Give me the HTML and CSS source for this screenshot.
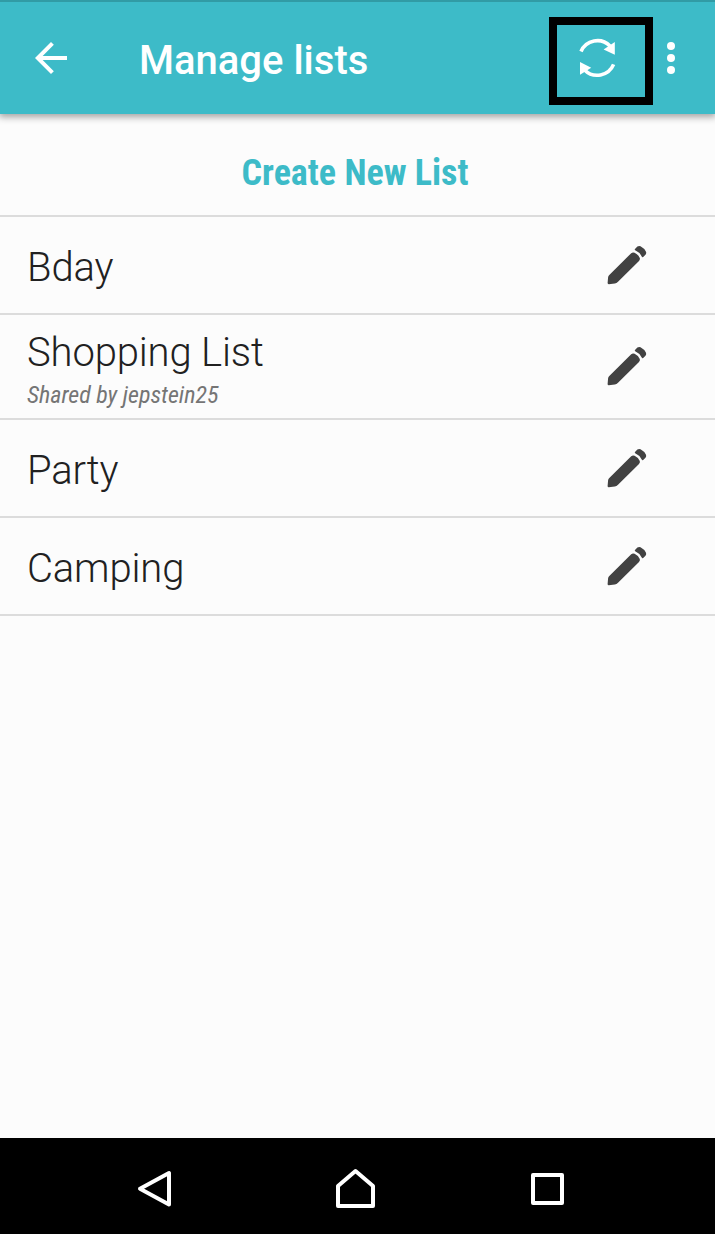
FILE: index.html
```
<!DOCTYPE html>
<html lang="en">
  <head>
    <meta charset="UTF-8" />
    <meta name="viewport" content="width=device-width, initial-scale=1.0" />
    <title>Manage lists</title>
    <link rel="stylesheet" href="styles.css">
  </head>
  <body>
    <header class="toolbar">
      <svg class="icon back" viewBox="0 0 24 24">
        <path d="M20 11H7.83l5.59-5.59L12 4l-8 8 8 8 1.41-1.41L7.83 13H20v-2z" />
      </svg>
      <h1>Manage lists</h1>
      <div class="sync">
        <svg class="icon" viewBox="0 0 48 48">
          <path class="arc" d="M8 17.5A17.7 17.7 0 0 1 37 12" />
          <path d="M41.8 8V20.8L30.6 15.4z" />
          <path class="arc" d="M40.6 30.4A17.7 17.7 0 0 1 11.6 35.9" />
          <path d="M7 28V40.8L18.2 33.8z" />
        </svg>
      </div>
      <svg class="icon more" viewBox="0 0 24 24">
        <circle cx="12" cy="6" r="2" />
        <circle cx="12" cy="12" r="2" />
        <circle cx="12" cy="18" r="2" />
      </svg>
    </header>

    <main>
      <div class="create">Create New List</div>
      <ul class="lists">
        <li>
          <div class="name">Bday</div>
          <svg class="pencil" viewBox="0 0 40 40">
            <path d="M24.2 8.2Q25.8 6.9 27.6 7.8Q31.4 9.6 32.8 13Q33.3 14.6 32 15.9L11 36.8Q9.6 38.2 7.8 38.5L1.8 39.2Q.5 39.2.6 37.9L1.1 32.2Q1.3 31 2.3 30zM28.2 3.8L30.4 1.6Q31.8.4 33.5 1.2Q37.4 3.2 39 6.7Q39.6 8.4 38.5 9.7L36.2 12Q35.3 12.7 34.7 11.5Q32.6 7.2 28.2 5.3Q27.2 4.8 28.2 3.8z" />
          </svg>
        </li>
        <li class="shared">
          <div>
            <div class="name">Shopping List</div>
            <div class="owner">Shared by jepstein25</div>
          </div>
          <svg class="pencil" viewBox="0 0 40 40">
            <path d="M24.2 8.2Q25.8 6.9 27.6 7.8Q31.4 9.6 32.8 13Q33.3 14.6 32 15.9L11 36.8Q9.6 38.2 7.8 38.5L1.8 39.2Q.5 39.2.6 37.9L1.1 32.2Q1.3 31 2.3 30zM28.2 3.8L30.4 1.6Q31.8.4 33.5 1.2Q37.4 3.2 39 6.7Q39.6 8.4 38.5 9.7L36.2 12Q35.3 12.7 34.7 11.5Q32.6 7.2 28.2 5.3Q27.2 4.8 28.2 3.8z" />
          </svg>
        </li>
        <li>
          <div class="name">Party</div>
          <svg class="pencil" viewBox="0 0 40 40">
            <path d="M24.2 8.2Q25.8 6.9 27.6 7.8Q31.4 9.6 32.8 13Q33.3 14.6 32 15.9L11 36.8Q9.6 38.2 7.8 38.5L1.8 39.2Q.5 39.2.6 37.9L1.1 32.2Q1.3 31 2.3 30zM28.2 3.8L30.4 1.6Q31.8.4 33.5 1.2Q37.4 3.2 39 6.7Q39.6 8.4 38.5 9.7L36.2 12Q35.3 12.7 34.7 11.5Q32.6 7.2 28.2 5.3Q27.2 4.8 28.2 3.8z" />
          </svg>
        </li>
        <li>
          <div class="name">Camping</div>
          <svg class="pencil" viewBox="0 0 40 40">
            <path d="M24.2 8.2Q25.8 6.9 27.6 7.8Q31.4 9.6 32.8 13Q33.3 14.6 32 15.9L11 36.8Q9.6 38.2 7.8 38.5L1.8 39.2Q.5 39.2.6 37.9L1.1 32.2Q1.3 31 2.3 30zM28.2 3.8L30.4 1.6Q31.8.4 33.5 1.2Q37.4 3.2 39 6.7Q39.6 8.4 38.5 9.7L36.2 12Q35.3 12.7 34.7 11.5Q32.6 7.2 28.2 5.3Q27.2 4.8 28.2 3.8z" />
          </svg>
        </li>
      </ul>
    </main>

    <nav class="navbar">
      <svg viewBox="0 0 48 48">
        <path d="M34 9V40.4L5 24.8z" />
      </svg>
      <svg viewBox="0 0 48 48">
        <path d="M24.5 7L42 22V42H7V22z" />
      </svg>
      <svg viewBox="0 0 48 48">
        <path d="M6 11H35V39H6z" />
      </svg>
    </nav>
  </body>
</html>
```
FILE: styles.css
```
* {
  box-sizing: border-box;
}
body {
  display: flex;
  flex-direction: column;
  height: 100vh;
  margin: 0;
  background-color: #fcfcfc;
  font-family: Roboto, sans-serif;
  color: #212121;
}
svg {
  display: block;
  flex: none;
}
.toolbar {
  display: flex;
  align-items: center;
  height: 114px;
  padding: 0 20px 0 27px;
  background-color: #3dbbc8;
  border-top: 2px solid #319ba5;
  box-shadow: 0 2px 7px 1px rgba(0, 0, 0, 0.36);
  color: #fff;
}
.icon {
  width: 48px;
  height: 48px;
  fill: #fff;
}
.toolbar h1 {
  flex: 1;
  margin: 6px 0 0 64px;
  font-size: 40px;
  font-weight: 500;
  line-height: 48px;
}
.sync {
  display: flex;
  align-items: center;
  justify-content: center;
  width: 104px;
  height: 88px;
  margin-top: 6px;
  border: 8px solid #000;
  padding: 0 8px 6px 0;
}
.arc {
  fill: none;
  stroke: #fff;
  stroke-width: 3.6;
}
.more {
  margin-left: -6px;
}
main {
  flex: 1;
}
.create {
  height: 103px;
  padding-right: 5px;
  border-bottom: 2px solid #dcdcdc;
  font-family: "Roboto Condensed", Roboto, sans-serif;
  font-stretch: 75%;
  font-size: 36px;
  font-weight: 700;
  line-height: 118px;
  text-align: center;
  color: #3dbbc8;
}
.lists {
  margin: 0;
  padding: 0;
  list-style: none;
}
.lists li {
  display: flex;
  align-items: center;
  justify-content: space-between;
  height: 98px;
  padding: 0 68px 0 27px;
  border-bottom: 2px solid #dcdcdc;
}
.lists li.shared {
  height: 105px;
}
.name {
  padding-top: 6px;
  font-size: 40px;
  font-weight: 300;
  line-height: 48px;
  letter-spacing: -0.15px;
}
.shared .name {
  padding-top: 8px;
}
.owner {
  padding-top: 2px;
  font-family: "Roboto Condensed", Roboto, sans-serif;
  font-stretch: 75%;
  font-size: 24px;
  font-style: italic;
  line-height: 33px;
  color: #757575;
}
.pencil {
  width: 40px;
  height: 40px;
  fill: #424242;
}
.shared .pencil {
  margin-bottom: 1px;
}
.navbar {
  display: flex;
  align-items: center;
  justify-content: center;
  gap: 148px;
  height: 96px;
  padding: 4px 5px 0 0;
  background-color: #000;
}
.navbar svg {
  width: 48px;
  height: 48px;
  fill: none;
  stroke: #fff;
  stroke-width: 4;
  stroke-linejoin: round;
}
```
